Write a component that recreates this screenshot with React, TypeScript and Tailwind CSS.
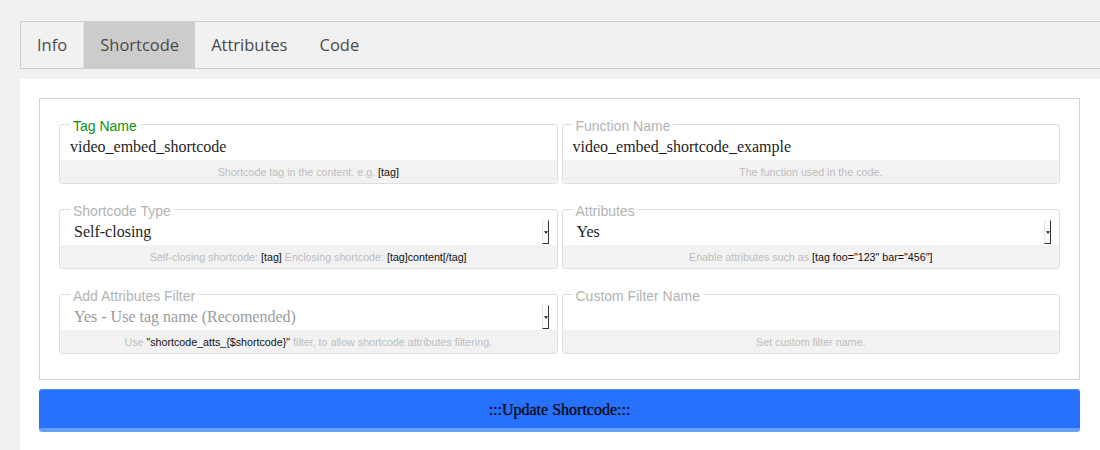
import React from "react";

const sans = "font-['Liberation_Sans',Arial,sans-serif]";
const serif = "font-['Liberation_Serif','Times_New_Roman',serif]";

function SelectArrow() {
  return (
    <div className="mr-[8px] mt-[3px] flex h-[24px] w-[7px] items-center justify-center border-b border-l border-r border-t border-b-[#333] border-l-[#e6e6e6] border-r-[#333] border-t-[#f4f4f4] bg-[#fafafa]">
      <svg width="5" height="3" viewBox="0 0 5 3" className="ml-[1px]">
        <polygon points="0,0 5,0 2.5,3" fill="#111" />
      </svg>
    </div>
  );
}

function Field({
  label,
  value,
  help,
  select,
  active,
  muted,
}: {
  label: string;
  value: string;
  help: React.ReactNode;
  select?: boolean;
  active?: boolean;
  muted?: boolean;
}) {
  return (
    <fieldset className="min-w-0 rounded-[3px] border border-[#dedede]">
      <legend
        className={`ml-[10px] px-[3px] text-[14px] leading-[16px] ${sans} ${
          active ? "text-[#0b9410]" : "text-[#b3b3b3]"
        }`}
      >
        <span className="relative top-[1.5px]">{label}</span>
      </legend>
      <div className="flex h-[28px] items-start justify-between">
        <div
          className={`${select ? "pl-[14px]" : "pl-[10px]"} pt-[1px] text-[16px] leading-[28px] ${serif} ${
            muted ? "text-[#9a9a9a]" : "text-[#1e1e1e]"
          }`}
        >
          {value}
        </div>
        {select && <SelectArrow />}
      </div>
      <div
        className={`h-[23px] rounded-b-[2px] bg-[#f2f2f2] pt-[1px] text-center text-[10.7px] leading-[23px] text-[#bdbdbd] ${sans}`}
      >
        {help}
      </div>
    </fieldset>
  );
}

const K = ({ children }: { children: React.ReactNode }) => (
  <span className="text-[#111]">{children}</span>
);

export default function App() {
  const tabs = ["Info", "Shortcode", "Attributes", "Code"];
  return (
    <div className="h-[450px] w-[1100px] overflow-hidden bg-[#f1f1f1] pl-[20px] pt-[21px]">
      <div className="flex h-[48px] w-[1100px] border border-[#cfcfcf] bg-[#f1f1f1] font-['Open_Sans',sans-serif] text-[16.5px] text-[#4a4a4a]">
        {tabs.map((t, i) => (
          <div
            key={t}
            className={`flex items-center px-4 ${
              i === 1 ? "bg-[#cccccc]" : ""
            } ${i === 0 ? "border-r border-r-[#e4e4e4]" : ""}`}
          >
            {t}
          </div>
        ))}
      </div>
      <div className="mt-[10px] h-[400px] w-[1080px] bg-white pl-[19px] pr-[20px] pt-[19px]">
        <div className="grid grid-cols-2 gap-x-[4px] gap-y-[17px] border border-[#d2d2d2] px-[19px] pb-[25px] pt-[17px]">
          <Field
            label="Tag Name"
            value="video_embed_shortcode"
            active
            help={
              <>
                Shortcode tag in the content. e.g. <K>[tag]</K>
              </>
            }
          />
          <Field
            label="Function Name"
            value="video_embed_shortcode_example"
            help="The function used in the code."
          />
          <Field
            label="Shortcode Type"
            value="Self-closing"
            select
            help={
              <>
                Self-closing shortcode: <K>[tag]</K> Enclosing shortcode:{" "}
                <K>[tag]content[/tag]</K>
              </>
            }
          />
          <Field
            label="Attributes"
            value="Yes"
            select
            help={
              <>
                Enable attributes such as <K>[tag foo="123" bar="456"]</K>
              </>
            }
          />
          <Field
            label="Add Attributes Filter"
            value="Yes - Use tag name (Recomended)"
            select
            muted
            help={
              <>
                Use <K>"shortcode_atts_{"{$shortcode}"}"</K> filter, to allow
                shortcode attributes filtering.
              </>
            }
          />
          <Field label="Custom Filter Name" value="" help="Set custom filter name." />
        </div>
        <button
          className={`mt-[9px] flex h-[43px] w-full items-center justify-center rounded-[3px] border-b-[4px] border-t border-b-[#64a0f6] border-t-[#4d8dff] bg-[#2672ff] pt-[1px] text-[16px] text-[#0a0a14] [text-shadow:0_0_1px_rgba(0,0,0,0.6)] ${serif}`}
        >
          :::Update Shortcode:::
        </button>
      </div>
    </div>
  );
}
